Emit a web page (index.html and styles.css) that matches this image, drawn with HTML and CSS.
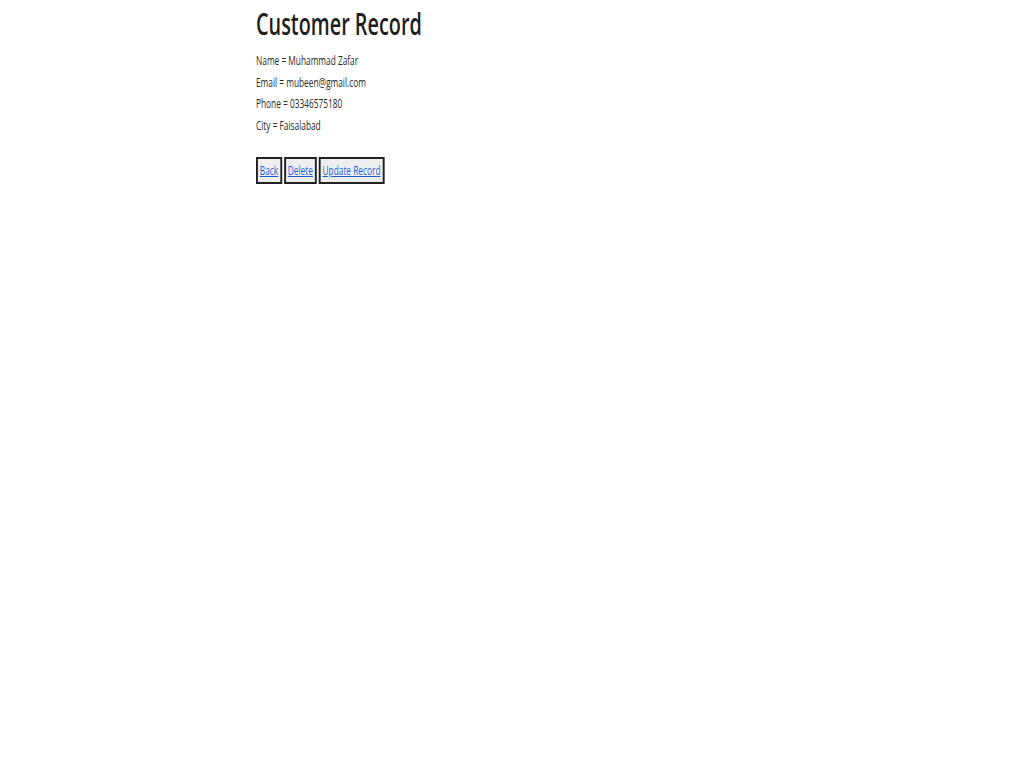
FILE: index.html
```html
<!DOCTYPE html>
<html>
<head>
<meta charset="utf-8">
<title>Customer Record</title>
<link rel="stylesheet" href="styles.css">
</head>
<body>
<div class="page">
  <h1 class="title">Customer Record</h1>
  <p class="field">Name = Muhammad Zafar</p>
  <p class="field">Email = mubeen@gmail.com</p>
  <p class="field">Phone = 03346575180</p>
  <p class="field">City = Faisalabad</p>
  <div class="actions">
    <button class="btn"><a href="#">Back</a></button>
    <button class="btn"><a href="#">Delete</a></button>
    <button class="btn"><a href="#">Update Record</a></button>
  </div>
</div>
</body>
</html>
```
FILE: styles.css
```css
body {
  margin: 0;
  background: #fff;
  font-family: "Open Sans", "Noto Sans", sans-serif;
  color: #222;
}
.page {
  margin-left: 256px;
  width: 512px;
  transform: scaleX(0.64);
  transform-origin: left top;
}
.title {
  margin: 0;
  padding-top: 3px;
  font-size: 31px;
  font-weight: 600;
  line-height: 40px;
  color: #1e1e1e;
}
.field {
  margin: 0;
  font-size: 13px;
  line-height: 21.5px;
  color: #2a2a2a;
}
.title + .field { margin-top: 7px; }
.actions {
  display: flex;
  gap: 3px;
  margin-top: 21px;
}
.btn {
  font-family: inherit;
  font-size: 13px;
  background: #efefef;
  border: 2px solid #222;
  border-left-width: 3px;
  border-right-width: 3px;
  padding: 2px 3px 3px;
  height: 27px;
}
.btn a {
  color: #1a5fd6;
}
```
